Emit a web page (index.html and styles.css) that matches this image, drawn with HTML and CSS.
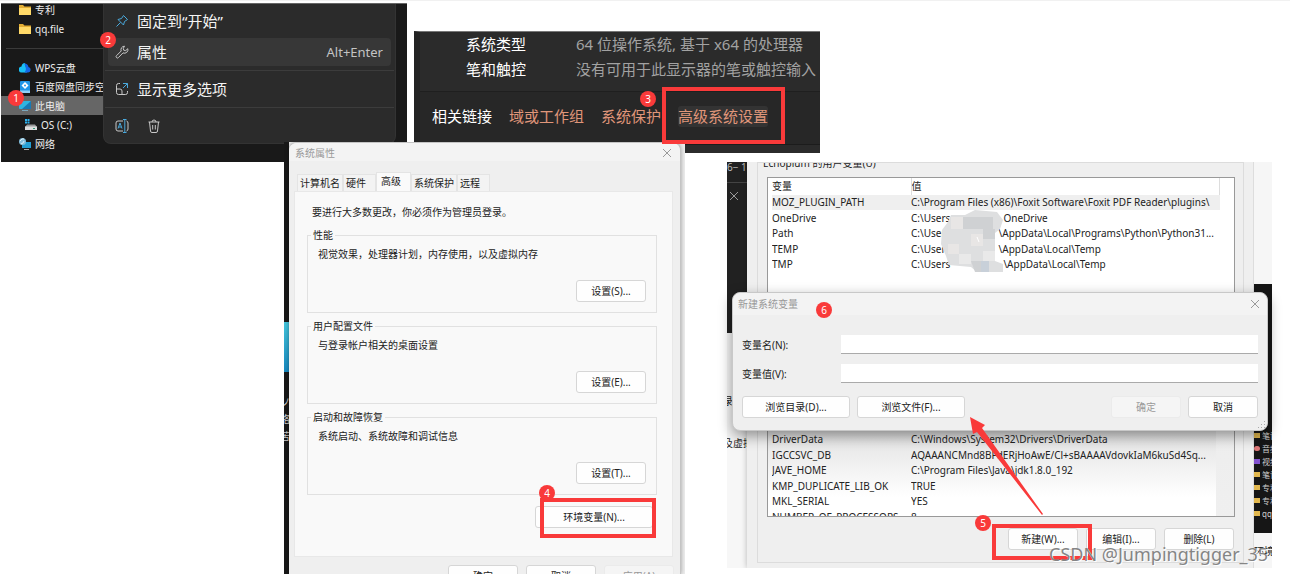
FILE: index.html
```html
<!DOCTYPE html>
<html lang="zh-CN">
<head>
<meta charset="utf-8">
<title>环境变量配置步骤</title>
<link rel="stylesheet" href="styles.css">
</head>
<body>
<main class="board">

<section class="shot shot-explorer">
  <ul class="tree">
    <li><svg class="ico" viewBox="0 0 12 12"><path d="M0 1h4l1.500 1.500H12V11H0z" fill="#e2ad35"/><path d="M0 4h12v7H0z" fill="#ffd968"/></svg>专利</li>
    <li><svg class="ico" viewBox="0 0 12 12"><path d="M0 1h4l1.500 1.500H12V11H0z" fill="#e2ad35"/><path d="M0 4h12v7H0z" fill="#ffd968"/></svg>qq.file</li>
    <li class="rule" role="separator"></li>
    <li><svg class="ico" viewBox="0 0 12 12"><path d="M3 10.500a3 3 0 0 1-.5-6A4 4 0 0 1 6 1l2 9.500z" fill="#19c0f5"/><path d="M5 1.500A4 4 0 0 1 9.500 5 2.800 2.800 0 0 1 9.200 10.500H5C8 9 7 4 5 1.500z" fill="#1467e6"/></svg>WPS云盘</li>
    <li><svg class="ico" viewBox="0 0 12 12"><rect x="1" width="10" height="12" rx="1" fill="#2196e8"/><path d="M6 1 9.500 4.500 6 8 2.500 4.500z" fill="#fff"/><circle cx="6" cy="4.500" r="1" fill="#2196e8"/><path d="M1 9.500h10V12H1z" fill="#8fd0f8"/></svg>百度网盘同步空</li>
    <li class="current"><svg class="ico" viewBox="0 0 12 12"><rect y="1" width="12" height="8" rx="1" fill="#2fb4e0"/><path d="M12 1v8H3z" fill="#1879b5"/><path d="M3 10.500h6" stroke="#7ba7bd"/></svg>此电脑</li>
    <li class="child"><svg class="ico" viewBox="0 0 12 12"><path d="M0 0h2v2H0zM2.500 0h2v2h-2zM0 2.500h2v2H0zM2.500 2.500h2v2h-2z" fill="#2db1ee"/><path d="M2 5.500h8L12 8H0z" fill="#999"/><path d="M0 7.500h12V11H0z" fill="#ddd"/><path d="M8 9.500h2" stroke="#397"/></svg>OS (C:)</li>
    <li><svg class="ico" viewBox="0 0 12 12"><rect x="3" y="4" width="9" height="6" fill="#249fd4"/><path d="M5 11.500h5" stroke="#aaa"/><circle cx="3.500" cy="3.500" r="3.500" fill="#83bddb"/><path d="M1 3q2-3 4-2M2 6q3-1 3-3" stroke="#dff3fa" fill="none"/></svg>网络</li>
  </ul>
  <div class="menu" role="menu">
    <button class="menu-item" role="menuitem"><svg class="mico" viewBox="0 0 14 14" fill="none" stroke="#4aa9dc"><path d="M8.500 1.500 12.500 5.500 9.500 7.500 8.500 11 3 5.500 6.500 4.500zM5.500 8.500 1.500 12.500" stroke-linejoin="round"/></svg>固定到“开始”</button>
    <button class="menu-item hover" role="menuitem"><svg class="mico" viewBox="0 0 14 14" fill="none" stroke="#c8c8c8"><path d="M9.500 1.200A3.500 3.500 0 0 0 6.200 6L1.500 10.700a1.300 1.300 0 0 0 1.900 1.900L8 7.900a3.500 3.500 0 0 0 4.800-4.200L10.700 5.600 8.700 5.200 8.300 3.300z" stroke-linejoin="round"/></svg>属性<kbd>Alt+Enter</kbd></button>
    <hr>
    <button class="menu-item" role="menuitem"><svg class="mico" viewBox="0 0 14 14" fill="none" stroke="#c8c8c8"><path d="M5 1.500H3.500a2 2 0 0 0-2 2v7a2 2 0 0 0 2 2h7a2 2 0 0 0 2-2V9M1.500 7H5a2 2 0 0 1 2 2v3.500"/><path d="M8 1.500h4.500V6M12.500 1.500 8 6" stroke="#4aa9dc"/></svg>显示更多选项</button>
    <hr>
    <div class="menu-tools">
      <button aria-label="重命名"><svg class="mico" viewBox="0 0 14 14" fill="none" stroke="#c8c8c8"><path d="M8 2H3a2 2 0 0 0-2 2v6a2 2 0 0 0 2 2h5M11.500 2a2 2 0 0 1 1.500 2v6a2 2 0 0 1-1.500 2"/><path d="M8 .5h3.500M8 13.500h3.500M9.800.5v13M3 9.500 5 4l2 5.500M3.700 8h2.600" stroke="#4aa9dc"/></svg></button>
      <button aria-label="删除"><svg class="mico" viewBox="0 0 14 14" fill="none" stroke="#c8c8c8"><path d="M1.500 3h11M5 3a2 2 0 0 1 4 0M2.500 3l1 9a1.500 1.500 0 0 0 1.500 1.500h4A1.500 1.500 0 0 0 10.500 12l1-9M5.700 6v4.500M8.300 6v4.500"/></svg></button>
    </div>
  </div>
</section>

<section class="shot shot-about">
  <dl class="specs">
    <dt>系统类型</dt><dd>64 位操作系统, 基于 x64 的处理器</dd>
    <dt>笔和触控</dt><dd>没有可用于此显示器的笔或触控输入</dd>
  </dl>
  <nav class="links"><span>相关链接</span><a href="#domain">域或工作组</a><a href="#protect">系统保护</a><a href="#advanced" class="active">高级系统设置</a></nav>
</section>

<section class="shot shot-props">
  <div class="behind"><div class="cyan"></div><p>ソ<br>络<br>苦<br>:</p></div>
  <div class="window">
    <header class="titlebar"><h2>系统属性</h2><button class="close" aria-label="关闭"><svg viewBox="0 0 10 10"><path d="m1 1 8 8M9 1 1 9"/></svg></button></header>
    <div class="tabs" role="tablist"><button role="tab">计算机名</button><button role="tab">硬件</button><button role="tab" aria-selected="true" class="on">高级</button><button role="tab">系统保护</button><button role="tab">远程</button></div>
    <div class="page">
      <p class="note">要进行大多数更改，你必须作为管理员登录。</p>
      <fieldset><legend>性能</legend><p>视觉效果，处理器计划，内存使用，以及虚拟内存</p><button class="btn">设置(S)...</button></fieldset>
      <fieldset><legend>用户配置文件</legend><p>与登录帐户相关的桌面设置</p><button class="btn">设置(E)...</button></fieldset>
      <fieldset><legend>启动和故障恢复</legend><p>系统启动、系统故障和调试信息</p><button class="btn">设置(T)...</button></fieldset>
      <button class="btn env">环境变量(N)...</button>
    </div>
    <footer class="actions"><button class="btn">确定</button><button class="btn">取消</button><button class="btn" disabled>应用(A)</button></footer>
  </div>
</section>

<section class="shot shot-env">
  <div class="strip-left"><div class="dark"><span>6− 1</span><svg viewBox="0 0 10 10"><path d="m1 1 8 8M9 1 1 9"/></svg></div><p>录</p><p class="second">及虚拟</p></div>
  <div class="env-window">
    <div class="env-group">
      <h3>Echopium 的用户变量(U)</h3>
      <div class="list user">
        <table>
          <thead><tr><th>变量</th><th>值</th></tr></thead>
          <tbody>
            <tr class="picked"><td>MOZ_PLUGIN_PATH</td><td>C:\Program Files (x86)\Foxit Software\Foxit PDF Reader\plugins\</td></tr>
            <tr><td>OneDrive</td><td>C:\Users<span class="hid"></span>OneDrive</td></tr>
            <tr><td>Path</td><td>C:\User<span class="hid"></span>\AppData\Local\Programs\Python\Python31...</td></tr>
            <tr><td>TEMP</td><td>C:\User<span class="hid"></span>\AppData\Local\Temp</td></tr>
            <tr><td>TMP</td><td>C:\Users<span class="hid"></span>\AppData\Local\Temp</td></tr>
          </tbody>
        </table>
      </div>
      <div class="list system">
        <table>
          <tbody>
            <tr><td>DriverData</td><td>C:\Windows\System32\Drivers\DriverData</td></tr>
            <tr><td>IGCCSVC_DB</td><td>AQAAANCMnd8BFdERjHoAwE/Cl+sBAAAAVdovkIaM6kuSd4Sq...</td></tr>
            <tr><td>JAVE_HOME</td><td>C:\Program Files\Java\jdk1.8.0_192</td></tr>
            <tr><td>KMP_DUPLICATE_LIB_OK</td><td>TRUE</td></tr>
            <tr><td>MKL_SERIAL</td><td>YES</td></tr>
            <tr><td>NUMBER_OF_PROCESSORS</td><td>8</td></tr>
          </tbody>
        </table>
      </div>
      <div class="list-actions"><button class="btn">新建(W)...</button><button class="btn">编辑(I)...</button><button class="btn">删除(L)</button></div>
    </div>
  </div>
  <div class="strip-right">
    <ul>
      <li><i></i>笔记</li><li><i class="music"></i>音频</li><li><i class="video"></i>视频</li><li><i></i>笔记</li><li><i></i>专利</li><li><i></i>专利</li><li><i></i>qq</li>
    </ul>
    <p>环境</p>
  </div>
</section>

<svg class="mosaic" viewBox="0 0 62 64" aria-hidden="true">
  <path d="M10 6h14l10-5 22 2 6 8-3 9-5 4v28l8 3v8H36l-6-5-22-2-3-9-5-12 1-14 6-8z" fill="#dedfe0"/>
  <path d="M10 8h12v12H10zM30 25h12v12H30zM7 35h11v10H7z" fill="#e8e6e5"/><path d="M22 8h30v12H22zM42 20h12v10H42zM30 52h12v11h-8z" fill="#cfd1d3"/><path d="M18 45h12v10H18zM42 42h12v10H42z" fill="#e9e9e9"/><path d="M36 28l2 5" stroke="#fff"/><path d="M40 52h8v11h-8z" fill="#c8d0d9"/>
</svg>

<section class="dialog">
  <header class="titlebar"><h2>新建系统变量</h2><button class="close" aria-label="关闭"><svg viewBox="0 0 10 10"><path d="m1 1 8 8M9 1 1 9"/></svg></button></header>
  <form>
    <div class="field"><label for="vn">变量名(N):</label><input id="vn" type="text"></div>
    <div class="field"><label for="vv">变量值(V):</label><input id="vv" type="text"></div>
    <div class="dialog-actions"><button type="button" class="btn wide">浏览目录(D)...</button><button type="button" class="btn wide">浏览文件(F)...</button><span class="grow"></span><button type="button" class="btn" disabled>确定</button><button type="button" class="btn">取消</button></div>
  </form>
  <svg class="grip" viewBox="0 0 8 8" fill="#aaa"><path d="M6 0h1v1H6zM3 3h1v1H3zM6 3h1v1H6zM0 6h1v1H0zM3 6h1v1H3zM6 6h1v1H6z"/></svg>
</section>

<div class="frame frame-advanced"></div>
<div class="frame frame-env"></div>
<div class="frame frame-new"></div>
<svg class="arrow" viewBox="0 0 76 100" aria-hidden="true"><path d="M0 0 15 8 12 11 73 97 72 98 7 15 3 17z" fill="#f93a3a"/></svg>
<b class="badge b1">1</b><b class="badge b2">2</b><b class="badge b3">3</b><b class="badge b4">4</b><b class="badge b5">5</b><b class="badge b6">6</b>
<p class="watermark">CSDN @Jumpingtigger_35</p>
</main>
</body>
</html>
```
FILE: styles.css
```css
* { box-sizing: border-box; }
body, h2, h3, p, ul, dl, dd, fieldset { margin: 0; padding: 0; }
ul { list-style: none; }
body {
  background: #fff;
  color: #222;
  font: 10px/16px "Noto Sans", "Noto Sans CJK SC", sans-serif;
}
h2, h3, th { font-size: 10px; font-weight: 400; }
button { font: inherit; color: inherit; background: none; border: 0; padding: 0; }
svg { display: block; flex: none; }

.board { position: relative; min-height: 100vh; overflow: hidden; border-top: 1px solid #f1f1f1; }
.shot { position: absolute; overflow: hidden; }

/* File explorer with context menu */
.shot-explorer { left: 1px; top: 2px; width: 406px; height: 159px; background: #191919; border-top: 1px solid #666; }
.tree { margin-top: -4px; color: #eee; width: 102px; }
.tree li { display: flex; align-items: center; gap: 4px; height: 19px; padding-left: 18px; white-space: nowrap; overflow: hidden; }
.tree .rule { height: 20px; padding: 0; margin-left: 5px; background: linear-gradient(#3a3a3a, #3a3a3a) 0 10px / 100% 1px no-repeat; }
.tree .current { background: #666; }
.tree .child { padding-left: 24px; }
.ico { width: 12px; height: 12px; }
.menu { position: absolute; left: 102px; top: 0; width: 293px; padding: 3px 4px; background: #2b2b2b; border: 1px solid #333; border-top: 0; border-radius: 0 0 8px 8px; color: #f4f4f4; }
.menu-item { display: flex; align-items: center; gap: 8px; width: 100%; height: 28px; padding: 0 8px 0 7px; border-radius: 4px; font-size: 15px; margin-bottom: 3px; }
.menu-item.hover { background: #373737; }
.menu-item kbd { margin-left: auto; font: inherit; font-size: 13px; color: #c4c4c4; }
.menu hr { border: 0; border-top: 1px solid #3c3c3c; margin: 4px -3px; }
.mico { width: 14px; height: 14px; }
.menu-tools { display: flex; gap: 18px; padding: 7px 7px; }

/* Settings, about page */
.shot-about { left: 414px; top: 30px; width: 406px; height: 122px; background: #2b2b2b; border-top: 1px solid #777; border-left: 6px solid #232323; font-size: 15px; line-height: 25px; }
.specs { display: grid; grid-template-columns: 110px 1fr; padding: 0 0 9px 46px; color: #fff; border-bottom: 1px solid #1f1f1f; white-space: nowrap; }
.specs dd { color: #a2a2a2; }
.links { display: flex; gap: 17px; padding: 12px 0 15px 12px; background: #272727; border-bottom: 1px solid #1c1c1c; color: #fff; white-space: nowrap; }
.links a { color: #e0967a; text-decoration: none; }
.links .active { background: #333; border-radius: 3px; line-height: 21px; margin: 2px 0; }

/* System properties */
.shot-props { left: 284px; top: 141px; width: 401px; bottom: 0; display: flex; background: #ececec; }
.behind { width: 5px; overflow: hidden; background: #181818; color: #ccc; padding-top: 180px; flex: none; }
.behind .cyan { height: 50px; background: linear-gradient(#43c3da, #1787bd); }
.behind p { margin-top: 22px; margin-left: -4px; line-height: 17px; }
.window { width: 392px; flex: none; display: flex; flex-direction: column; background: #efefef; border: 1px solid #c4c4c4; border-width: 1px 1px 0 0; border-radius: 8px 8px 0 0; box-shadow: 0 0 4px #0005; }
.titlebar { display: flex; justify-content: space-between; align-items: center; height: 24px; padding: 0 8px 0 6px; background: #f3f3f3; border-radius: 8px 8px 0 0; color: #999; }
.close svg { width: 10px; height: 10px; }
.close path, .strip-left path { stroke: #999; fill: none; }
.tabs { display: flex; align-items: flex-end; padding: 11px 0 0 8px; }
.tabs button { height: 17px; padding: 0 2px; border: 1px solid #e4e4e4; border-bottom: 0; background: #f3f3f3; white-space: nowrap; }
.tabs button:nth-child(2) { padding-right: 9px; }
.tabs button:last-child { padding-right: 9px; }
.tabs .on { height: 19px; padding: 0 9px 2px 4px; background: #fafafa; }
.page { margin: 0 7px 0 5px; padding: 12px 15px 28px 12px; background: #f9f9f9; border: 1px solid #e8e8e8; }
.note { padding-left: 5px; margin-bottom: 7px; }
fieldset { border: 1px solid #e1e1e1; height: 86px; margin-bottom: 5px; padding: 3px 10px 10px; display: flex; flex-direction: column; align-items: flex-end; justify-content: space-between; min-width: 0; }
legend { padding: 0 2px; margin-left: -7px; }
fieldset p { align-self: flex-start; }
.btn { min-width: 70px; height: 22px; padding: 0 6px; background: #fefefe; border: 1px solid #d6d6d6; border-radius: 3px; white-space: nowrap; color: #222; }
.btn:disabled { background: #f5f5f5; border-color: #ebebeb; color: #999; }
.env { display: block; width: 118px; margin: 11px 4px 0 auto; }
.actions { display: flex; justify-content: flex-end; gap: 8px; padding: 8px 6px 0; }
.shot-props .titlebar { height: 25px; padding-top: 2px; }

/* Environment variables */
.shot-env { left: 727px; top: 161px; width: 545px; height: 406px; display: flex; background: #eee; }
.strip-left { width: 20px; flex: none; overflow: hidden; background: #f7f7f7; white-space: nowrap; }
.strip-left .dark { height: 171px; background: #212121; color: #bbb; }
.strip-left .dark span { display: block; height: 21px; line-height: 10px; border-bottom: 1px solid #444; }
.strip-left svg { width: 10px; height: 10px; margin: 8px 0 0 2px; }
.strip-left p { margin: 60px 0 0 -4px; }
.strip-left p.second { margin-top: 26px; }
.env-window { flex: 1; padding: 0 9px 4px 10px; background: #efefef; border-right: 1px solid #ddd; min-width: 0; box-shadow: 0 0 6px #0004; }
.env-group { height: 401px; border: 1px solid #dcdcdc; padding: 0 8px 0 9px; overflow: hidden; }
.env-group h3 { margin-top: -8px; margin-left: -4px; }
.list { background: #fff; border: 1px solid #999; overflow: hidden; }
.list table { width: 448px; margin-left: 4px; border-collapse: collapse; table-layout: fixed; color: #222; }
.list td, .list th { padding: 0; text-align: left; white-space: nowrap; height: 15px; line-height: 15px; overflow: hidden; }
.list td:first-child, .list th:first-child { width: 139px; }
.list th { border-right: 1px solid #ddd; height: 17px; }
.user { margin-top: 6px; height: 140px; }
.user tbody tr:nth-child(even) td { height: 16px; }
.picked { background: #efefef; }
.hid { display: inline-block; width: 53px; }
.system { margin-top: 110px; height: 90px; padding-top: 5px; background: linear-gradient(90deg, #0000 448px, #eeee 448px), linear-gradient(#e0e0e0, #fff 70px); border-top: 0; }
.system tr:nth-child(even) td { height: 16px; }
.list-actions { display: flex; justify-content: flex-end; gap: 8px; padding: 11px 1px 0 0; }
.strip-right { width: 18px; flex: none; overflow: hidden; background: #f6f6f6; padding-top: 122px; white-space: nowrap; }
.strip-right ul { height: 249px; padding-top: 145px; background: #161616; color: #ccc; font-size: 8px; line-height: 13px; }
.strip-right li { display: flex; align-items: center; gap: 2px; height: 13px; }
.strip-right i { width: 6px; height: 5px; background: #e2b84f; flex: none; }
.strip-right .music { background: #d77; border-radius: 3px; }
.strip-right .video { background: #8352cf; }
.strip-right p { margin-top: 10px; }
.mosaic { position: absolute; left: 941px; top: 208px; width: 62px; height: 64px; }

/* New system variable */
.dialog { position: absolute; left: 732px; top: 291px; width: 536px; background: #efefef; border: 1px solid #c8c8c8; border-radius: 8px; box-shadow: 0 5px 14px #0006; }
.dialog .titlebar { height: 22px; padding: 0 7px 0 5px; }
.dialog form { padding: 20px 9px 12px 9px; }
.field { display: flex; align-items: center; margin-bottom: 10px; }
.field label { width: 99px; }
.field input { flex: 1; height: 19px; min-width: 0; border: 0; border-bottom: 1px solid #aaa; background: #fff; padding: 0 4px; font: inherit; }
.dialog-actions { display: flex; gap: 7px; margin-top: 13px; }
.dialog-actions .wide { width: 108px; }
.dialog-actions .grow { flex: 1; }
.grip { position: absolute; right: 1px; bottom: 1px; width: 8px; height: 8px; }

/* Annotations */
.frame { position: absolute; border: 4px solid #f93a3a; }
.frame-advanced { left: 662px; top: 86px; width: 123px; height: 57px; }
.frame-env { left: 540px; top: 497px; width: 116px; height: 40px; }
.frame-new { left: 992px; top: 523px; width: 100px; height: 36px; }
.arrow { position: absolute; left: 970px; top: 416px; width: 76px; height: 100px; }
.badge { position: absolute; width: 16px; height: 16px; border-radius: 50%; background: #f93a3a; color: #fff; font-weight: 400; text-align: center; }
.b1 { left: 8px; top: 89px; }
.b2 { left: 100px; top: 31px; }
.b3 { left: 640px; top: 90px; }
.b4 { left: 539px; top: 484px; }
.b5 { left: 975px; top: 514px; }
.b6 { left: 816px; top: 301px; }
.watermark { position: absolute; left: 1049px; top: 541px; font-size: 18px; line-height: 24px; white-space: nowrap; color: #858585; text-shadow: 1px 1px 0 #fff; }
```
